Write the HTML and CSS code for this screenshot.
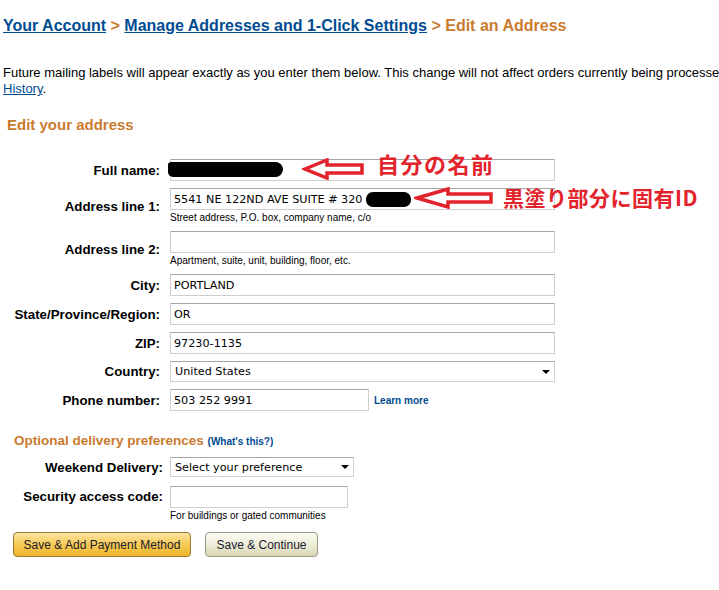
FILE: index.html
```html
<!doctype html>
<html>
    <head>
        <meta charset="utf-8">
        <title>Edit an Address</title>
        <link rel="stylesheet" href="styles.css">
    </head>
    <body>
        <div class="page">
            <h1 class="crumbs">
                <a href="#">Your Account</a> <span class="sep">&gt;</span>
                <a href="#">Manage Addresses and 1-Click Settings</a> <span class="sep">&gt;</span>
                <span class="current">Edit an Address</span>
            </h1>

            <p class="intro">
                <span class="nowrap">Future mailing labels will appear exactly as you enter them below. This change will not affect orders currently being processed. To change an existing order, visit Your Order</span><br>
                <a href="#">History</a>.
            </p>

            <h2 class="section-title">Edit your address</h2>

            <div class="form">
                <label class="label">Full name:</label>
                <div class="field"><input class="text wide" type="text" value=""></div>

                <label class="label">Address line 1:</label>
                <div class="field">
                    <input class="text wide" type="text" value="5541 NE 122ND AVE SUITE # 320">
                    <div class="hint">Street address, P.O. box, company name, c/o</div>
                </div>

                <label class="label">Address line 2:</label>
                <div class="field">
                    <input class="text wide" type="text" value="">
                    <div class="hint">Apartment, suite, unit, building, floor, etc.</div>
                </div>

                <label class="label">City:</label>
                <div class="field"><input class="text wide" type="text" value="PORTLAND"></div>

                <label class="label">State/Province/Region:</label>
                <div class="field"><input class="text wide" type="text" value="OR"></div>

                <label class="label">ZIP:</label>
                <div class="field"><input class="text wide" type="text" value="97230-1135"></div>

                <label class="label">Country:</label>
                <div class="field">
                    <div class="select wide country">
                        <select><option>United States</option></select>
                    </div>
                </div>

                <label class="label">Phone number:</label>
                <div class="field inline">
                    <input class="text phone" type="text" value="503 252 9991">
                    <a class="learn" href="#">Learn more</a>
                </div>

                <!-- annotations drawn over the form -->
                <div class="blot blot-name"></div>
                <div class="blot blot-id"></div>
                <svg class="arrow arrow-name" width="63" height="22" viewBox="0 0 63 22">
                    <polygon points="3,11 25,2 25,7 60,7 60,15 25,15 25,20" />
                </svg>
                <svg class="arrow arrow-id" width="80" height="22" viewBox="0 0 80 22">
                    <polygon points="3,11 34,2 34,7 77,7 77,15 34,15 34,20" />
                </svg>
                <div class="note note-name">自分の名前</div>
                <div class="note note-id">黒塗り部分に固有ID</div>
            </div>

            <div class="optional">
                <h3 class="optional-title">Optional delivery preferences <a href="#">(What's this?)</a></h3>
                <div class="form form-optional">
                    <label class="label">Weekend Delivery:</label>
                    <div class="field">
                        <div class="select weekend">
                            <select><option>Select your preference</option></select>
                        </div>
                    </div>

                    <label class="label">Security access code:</label>
                    <div class="field">
                        <input class="text code" type="text" value="">
                        <div class="hint">For buildings or gated communities</div>
                    </div>
                </div>
            </div>

            <div class="actions">
                <button class="btn btn-primary">Save &amp; Add Payment Method</button>
                <button class="btn btn-secondary">Save &amp; Continue</button>
            </div>
        </div>
    </body>
</html>
```

FILE: styles.css
```css
* {
    font-family: "Liberation Sans", Arial, sans-serif;
}

html, body {
    margin: 0;
    padding: 0;
    background: #fff;
    overflow: hidden;
}

a {
    color: #004b91;
}

.page {
    padding-top: 16px;
    color: #000;
}

.crumbs {
    margin: 0;
    padding-left: 3px;
    font-size: 16px;
    line-height: 20px;
    font-weight: bold;
    white-space: nowrap;
}

.crumbs .sep,
.crumbs .current {
    color: #c97b2f;
}

.intro {
    margin: 29px 0 0;
    padding-left: 3px;
    font-size: 13px;
    line-height: 16px;
}

.nowrap {
    white-space: nowrap;
}

.section-title {
    margin: 19px 0 0 7px;
    font-size: 15px;
    line-height: 18px;
    color: #c97b2f;
}

.form {
    position: relative;
    margin-top: 25px;
    display: grid;
    grid-template-columns: 160px auto;
    column-gap: 10px;
    row-gap: 7px;
    justify-content: start;
    align-items: center;
}

.label {
    text-align: right;
    font-size: 13.3px;
    font-weight: bold;
    white-space: nowrap;
}

.field {
    display: flex;
    flex-direction: column;
    align-items: flex-start;
}

.field.inline {
    flex-direction: row;
    align-items: center;
}

.text {
    box-sizing: border-box;
    height: 22px;
    margin: 0;
    padding: 0 3px;
    border: 1px solid #cfcfcf;
    border-top-color: #a6a6a6;
    background: #fff;
    font-family: "DejaVu Sans", sans-serif;
    font-size: 11.2px;
    color: #000;
}

.wide {
    width: 385px;
}

.phone {
    width: 199px;
}

.code {
    width: 178px;
}

.hint {
    margin-top: 2px;
    font-size: 10px;
    line-height: 12px;
    color: #000;
}

.learn {
    margin-left: 5px;
    font-size: 10px;
    font-weight: bold;
    text-decoration: none;
}

.select {
    position: relative;
    box-sizing: border-box;
    border: 1px solid #d2d2d2;
    border-top-color: #a6a6a6;
    background: #fff;
}

.select select {
    appearance: none;
    -webkit-appearance: none;
    display: block;
    width: 100%;
    height: 100%;
    margin: 0;
    padding: 0 4px;
    border: 0;
    background: transparent;
    font-family: "DejaVu Sans", sans-serif;
    font-size: 11.2px;
    color: #000;
}

.select::after {
    content: "";
    position: absolute;
    right: 4px;
    top: 50%;
    margin-top: -2px;
    border-left: 4px solid transparent;
    border-right: 4px solid transparent;
    border-top: 4px solid #000;
}

.country {
    height: 21px;
}

.weekend {
    width: 184px;
    height: 20px;
}

.blot {
    position: absolute;
    background: #000;
    border-radius: 8px;
}

.blot-name {
    left: 168px;
    top: 3px;
    width: 115px;
    height: 15px;
    border-radius: 4px 9px 9px 6px;
}

.blot-id {
    left: 366px;
    top: 33px;
    width: 45px;
    height: 15px;
    border-radius: 7px;
}

.arrow {
    position: absolute;
}

.arrow polygon {
    fill: #fff;
    stroke: #e3232b;
    stroke-width: 3.5;
    stroke-linejoin: miter;
}

.arrow-name {
    left: 302px;
    top: -1px;
}

.arrow-id {
    left: 414px;
    top: 28px;
}

.note {
    position: absolute;
    font-family: "Noto Sans CJK JP", sans-serif;
    font-weight: bold;
    color: #e3232b;
    white-space: nowrap;
}

.note-name {
    left: 377px;
    top: -8px;
    font-size: 22px;
    line-height: 24px;
    letter-spacing: 1.5px;
}

.note-id {
    left: 503px;
    top: 26px;
    font-size: 21px;
    line-height: 24px;
    letter-spacing: 0.5px;
}

.optional {
    margin-top: 22px;
}

.optional-title {
    margin: 0 0 0 14px;
    font-size: 13.5px;
    line-height: 16px;
    color: #c97b2f;
}

.optional-title a {
    font-size: 10px;
    text-decoration: none;
}

.form-optional {
    margin-top: 7px;
    grid-template-columns: 163px auto;
    column-gap: 7px;
    row-gap: 8px;
    align-items: start;
}

.form-optional .label {
    line-height: 21px;
}

.actions {
    display: flex;
    gap: 14px;
    margin: 10px 0 0 13px;
}

.btn {
    box-sizing: border-box;
    height: 25px;
    padding: 0;
    border-radius: 4px;
    font-size: 12px;
    color: #1b1b2e;
    white-space: nowrap;
    cursor: pointer;
}

.btn-primary {
    width: 178px;
    border: 1px solid #9c7a2a;
    background: linear-gradient(#fbe3a1, #f6c84f 55%, #eeb52e);
}

.btn-secondary {
    width: 113px;
    border: 1px solid #9b9a82;
    background: linear-gradient(#fbfbf4, #ecebd6 55%, #d9d6b3);
}
```
